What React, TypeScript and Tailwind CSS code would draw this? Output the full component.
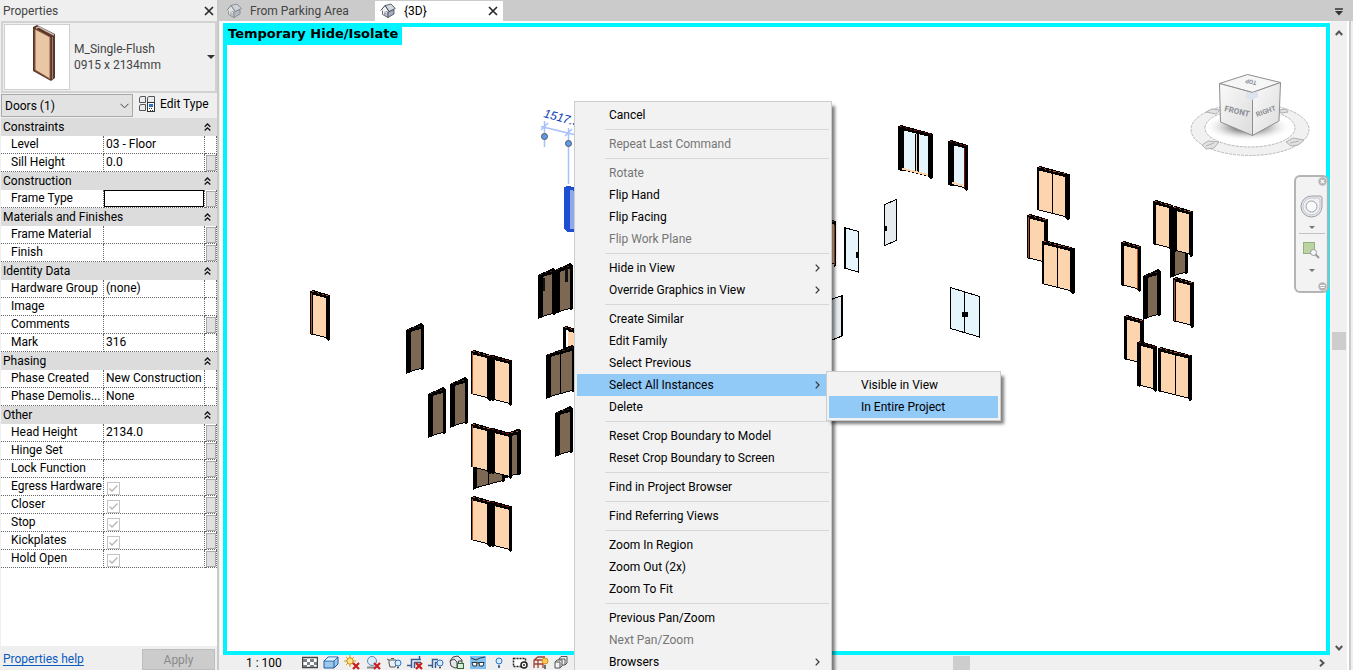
import React from "react";

type Kind = "value" | "check";
type Row = { label: string; value?: string; kind?: Kind; button?: boolean; focus?: boolean };
type Group = { title: string; rows: Row[] };

const groups: Group[] = [
  { title: "Constraints", rows: [{ label: "Level", value: "03 - Floor" }, { label: "Sill Height", value: "0.0", button: true }] },
  { title: "Construction", rows: [{ label: "Frame Type", button: true, focus: true }] },
  { title: "Materials and Finishes", rows: [{ label: "Frame Material", button: true }, { label: "Finish", button: true }] },
  {
    title: "Identity Data",
    rows: [
      { label: "Hardware Group", value: "(none)" },
      { label: "Image" },
      { label: "Comments", button: true },
      { label: "Mark", value: "316" },
    ],
  },
  { title: "Phasing", rows: [{ label: "Phase Created", value: "New Construction" }, { label: "Phase Demolis...", value: "None" }] },
  {
    title: "Other",
    rows: [
      { label: "Head Height", value: "2134.0", button: true },
      { label: "Hinge Set", button: true },
      { label: "Lock Function", button: true },
      { label: "Egress Hardware", kind: "check", button: true },
      { label: "Closer", kind: "check", button: true },
      { label: "Stop", kind: "check", button: true },
      { label: "Kickplates", kind: "check", button: true },
      { label: "Hold Open", kind: "check", button: true },
    ],
  },
];

type Item = { label: string; disabled?: boolean; sub?: boolean; active?: boolean };

const menu: Item[][] = [
  [{ label: "Cancel" }],
  [{ label: "Repeat Last Command", disabled: true }],
  [{ label: "Rotate", disabled: true }, { label: "Flip Hand" }, { label: "Flip Facing" }, { label: "Flip Work Plane", disabled: true }],
  [{ label: "Hide in View", sub: true }, { label: "Override Graphics in View", sub: true }],
  [
    { label: "Create Similar" },
    { label: "Edit Family" },
    { label: "Select Previous" },
    { label: "Select All Instances", sub: true, active: true },
    { label: "Delete" },
  ],
  [{ label: "Reset Crop Boundary to Model" }, { label: "Reset Crop Boundary to Screen" }],
  [{ label: "Find in Project Browser" }],
  [{ label: "Find Referring Views" }],
  [{ label: "Zoom In Region" }, { label: "Zoom Out (2x)" }, { label: "Zoom To Fit" }],
  [{ label: "Previous Pan/Zoom" }, { label: "Next Pan/Zoom", disabled: true }, { label: "Browsers", sub: true }],
];

const submenu: Item[] = [{ label: "Visible in View" }, { label: "In Entire Project", active: true }];

const CREAM = "#fcd4ae";
const BROWN = "#7d6854";
const GLASS = "#e6f4fc";

function CloseX() {
  return (
    <svg width="10" height="10" viewBox="0 0 10 10" aria-hidden="true">
      <path d="M1 1 L9 9 M9 1 L1 9" stroke="#2a2a2a" strokeWidth="1.7" />
    </svg>
  );
}

function HomeIcon({ faded = false }: { faded?: boolean }) {
  return (
    <svg width="16" height="16" viewBox="0 0 16 16" aria-hidden="true" opacity={faded ? 0.55 : 1}>
      <path d="M2.500 6.500 V11.500 L8 14.500 V9 Z" fill="#f4f5f7" stroke="#3f4650" strokeWidth=".8" />
      <path d="M8 9 L14 6.500 V11 L8 14.500 Z" fill="#a3adbd" stroke="#3f4650" strokeWidth=".8" />
      <path d="M5 2.500 L11 1 L15.300 5.500 L9 8.500 Z" fill="#d3d8e0" stroke="#3f4650" strokeWidth=".8" />
      <path d="M.8 7.500 L5 2.500 L9 8.500" fill="#f4f5f7" stroke="#3f4650" />
      <path d="M4.500 9.500 V12.500 L6.200 13.400 V10.300 Z" fill="#c3c9d3" stroke="#5b6270" strokeWidth=".5" />
    </svg>
  );
}

function PropertiesPanel() {
  return (
    <aside className="flex w-[217px] shrink-0 flex-col bg-[#efefef] pl-px">
      <header className="flex h-[21px] items-center justify-between pl-[2px] pr-[3px] text-[#444]">
        <h2>Properties</h2>
        <button aria-label="Close properties" className="flex size-[10px] items-center justify-center">
          <CloseX />
        </button>
      </header>
      <button className="flex h-[72px] items-center border-2 border-[#d2d2d2] pl-px text-left text-[#444]">
        <span className="flex h-[66px] w-[66px] shrink-0 items-start justify-center border border-[#cfcfcf] bg-white">
          <svg width="64" height="60" viewBox="5 24 64 60" aria-hidden="true">
            <path d="M33 26 L37 24 L55 33 V77 L51 80 L33 70 Z" fill="#5a3628" />
            <path d="M35 28 L50 36 V78 L35 69 Z" fill="#e9c6a4" stroke="#8b5a44" />
            <path d="M36 27 L39 26 L54 34" fill="none" stroke="#c9bdb8" strokeWidth="1.5" />
            <path d="M52.500 36 V78" stroke="#9a8078" />
          </svg>
        </span>
        <span className="flex-1 pl-1 leading-4">
          M_Single-Flush
          <br />
          0915 x 2134mm
        </span>
        <svg width="8" height="4" viewBox="0 0 8 4" aria-hidden="true">
          <path d="M0 0 H8 L4 4 Z" fill="#333" />
        </svg>
      </button>
      <div className="flex h-[25px] shrink-0 items-center">
        <label className="relative flex w-[132px] items-center">
          <select aria-label="Category filter" className="h-[23px] w-full appearance-none border border-[#a9a9a9] bg-[#e2e2e2] pl-[3px] text-black">
            <option>Doors (1)</option>
          </select>
          <svg width="9" height="6" viewBox="0 0 9 6" className="absolute right-1" aria-hidden="true">
            <path d="M.5 .8 L4.500 4.800 L8.500 .8" fill="none" stroke="#444" />
          </svg>
        </label>
        <button className="ml-[6px] flex items-center gap-[5px] pb-[3px]">
          <svg width="16" height="16" viewBox="0 0 16 16" aria-hidden="true">
            <g fill="#e9edf2" stroke="#555">
              <path d="M1.500 .5 H6.500 V6.500 H.5 V2 Z" />
              <path d="M9.500 .5 H15.500 V6.500 H8.500 V2 Z" />
              <path d="M1.500 8.500 H6.500 V14.500 H.5 V10 Z" />
              <rect x="8.500" y="6.500" width="7" height="9" fill="#fff" stroke="#333" />
            </g>
            <rect x="10" y="8" width="4" height="3" fill="#2f6fc4" />
            <path d="M10 12.500 h1 M12 12.500 h1 M11 14.500 h1 M13 14.500 h1" stroke="#333" />
          </svg>
          Edit Type
        </button>
      </div>
      <div className="min-h-0 flex-1 bg-white">
        <table className="w-full table-fixed border-separate border-spacing-0 leading-[16px]">
          <colgroup>
            <col className="w-[103px]" />
            <col />
            <col className="w-[12px]" />
          </colgroup>
          {groups.map((g) => (
            <tbody key={g.title}>
              <tr>
                <th colSpan={3} className="h-[18px] bg-[#dcdcdc] p-0 text-left font-normal">
                  <div className="flex h-[18px] items-center justify-between pl-[2px] pr-[6px]">
                    {g.title}
                    <button aria-label={"Collapse " + g.title} className="flex">
                      <svg width="7" height="8" viewBox="0 0 7 8" aria-hidden="true">
                        <path d="M.7 3.700 L3.500 1 L6.300 3.700 M.7 7.500 L3.500 4.800 L6.300 7.500" fill="none" stroke="#111" strokeWidth="1.3" />
                      </svg>
                    </button>
                  </div>
                </th>
              </tr>
              {g.rows.map((r) => (
                <tr key={r.label}>
                  <td className="h-[18px] border-r border-b border-dotted border-[#666] p-0">
                    <label htmlFor={r.label} className="block h-[17px] whitespace-nowrap pl-[10px]">
                      {r.label}
                    </label>
                  </td>
                  <td className="h-[18px] border-r border-b border-dotted border-[#666] p-0">
                    {r.kind === "check" ? (
                      <span className="relative flex h-[17px] items-end pl-[3px]">
                        <input
                          id={r.label}
                          type="checkbox"
                          defaultChecked
                          disabled
                          className="size-[13px] appearance-none border border-[#c4c4c4] bg-white"
                        />
                        <svg width="13" height="13" viewBox="0 0 13 13" className="absolute" aria-hidden="true">
                          <path d="M2.500 6.500 L5 9 L10.500 3.500" fill="none" stroke="#b4b4b4" strokeWidth="1.3" />
                        </svg>
                      </span>
                    ) : (
                      <input
                        id={r.label}
                        defaultValue={r.value ?? ""}
                        className={
                          r.focus
                            ? "block h-[17px] w-full border border-black bg-white px-[2px] outline-none"
                            : "block h-[17px] w-full bg-white pb-px pl-[2px] outline-none"
                        }
                      />
                    )}
                  </td>
                  <td className="h-[18px] border-r border-b border-dotted border-[#666] p-0">
                    {r.button && (
                      <button aria-label={"Associate " + r.label} className="ml-px block h-4 w-[10px] border border-[#aaa] bg-[#e0e0e0]" />
                    )}
                  </td>
                </tr>
              ))}
            </tbody>
          ))}
        </table>
      </div>
      <footer className="flex h-6 shrink-0 items-end justify-between pl-[2px] pr-[2px]">
        <a href="#help" className="mb-[3px] leading-4 text-[#0a5cbf] underline underline-offset-2">
          Properties help
        </a>
        <button disabled className="h-[21px] w-[73px] border border-[#bdbdbd] bg-[#cccccc] text-[#8a8a8a]">
          Apply
        </button>
      </footer>
    </aside>
  );
}

type DoorProps = {
  x: number;
  r: number;
  y: number;
  h?: number;
  up?: boolean;
  fill?: string;
  lw?: number;
  rw?: number;
  mid?: number;
  edge?: "left" | "right";
  edgeColor?: string;
  dots?: string;
};

function Door({ x, r, y, h = 43, up, fill = CREAM, lw = 3, rw = 4, mid, edge, edgeColor = "#a9542f", dots = "#b05030" }: DoorProps) {
  const k = up ? -0.27 : 0.25;
  const at = (px: number) => y + (px - x) * k;
  const a = x + lw;
  const b = r - rw;
  const top = up ? `${x},${y} ${r - 3},${at(r) - 2} ${r},${at(r)}` : `${x},${y} ${x + 3},${y - 1} ${r},${at(r) - 1}`;
  const foot = Math.min(2, lw - 2);
  return (
    <g>
      <polygon points={`${top} ${r},${at(r) + h} ${x},${y + h}`} fill="#000" />
      {foot > 0 && <polygon points={`${x},${y + h - 1} ${a},${at(a) + h - 1} ${a - 1},${at(a) + h + 1} ${x},${y + h + foot - 1}`} fill="#000" />}
      <polygon points={`${b},${at(b) + h - 1} ${r},${at(r) + h - 1} ${r},${at(r) + h} ${r - 2},${at(r) + h + 2} ${b},${at(b) + h}`} fill="#000" />
      <polygon points={`${a},${at(a) + 3} ${b},${at(b) + 3} ${b},${at(b) + h - 1} ${a},${at(a) + h - 1}`} fill={fill} />
      <line x1={x + 2} y1={at(x + 2)} x2={r - 2} y2={at(r - 2)} stroke={dots} strokeDasharray="2 3" />
      {mid && <line x1={mid} x2={mid} y1={at(mid) + 2} y2={at(mid) + h} stroke="#000" />}
      {edge === "left" && <line x1={x + 1} x2={x + 1} y1={y + 2} y2={y + h} stroke={edgeColor} />}
      {edge === "right" && <line x1={b} x2={b} y1={at(b) + 3} y2={at(b) + h} stroke={edgeColor} />}
    </g>
  );
}

function Scene() {
  return (
    <svg viewBox="227 27 1099 624" preserveAspectRatio="xMinYMin meet" className="block h-full w-full" role="img" aria-label="3D view of doors">
      <g shapeRendering="crispEdges">
        <Door x={310} r={330} y={291} edge="left" />
        <Door x={406} r={424} y={330} up fill={BROWN} lw={5} rw={3} dots="#4a2a20" />
        <Door x={428} r={446} y={394} up fill={BROWN} lw={5} rw={3} dots="#4a2a20" />
        <Door x={450} r={468} y={384} up fill={BROWN} lw={5} rw={3} dots="#4a2a20" />

        <Door x={473} r={505} y={449} h={40} up fill={BROWN} lw={4} rw={3} mid={488} />
        <Door x={504} r={521} y={435} up fill={BROWN} lw={5} rw={4} />
        {[351, 424, 497].map((y) => (
          <g key={y}>
            <Door x={471} r={492} y={y} lw={2} rw={5} edge="left" />
            <Door x={490} r={512} y={y + 5} lw={5} rw={3} dots="#8a1010" />
          </g>
        ))}

        <Door x={538} r={556} y={275} up fill={BROWN} lw={5} rw={4} dots="#4a2a20" />
        <Door x={555} r={573} y={270} up fill={BROWN} lw={5} rw={3} dots="#4a2a20" />
        <path d="M543 278 h2 v13 h-2 z M566 268 h2 v14 h-3 v-13 z" fill="#111" />
        <Door x={563} r={580} y={327} fill={CREAM} lw={5} rw={3} />
        <rect x="566" y="330" width="2" height="25" fill="#fff" />
        <Door x={546} r={575} y={355} up fill={BROWN} lw={5} rw={3} mid={560} dots="#4a2a20" />
        <Door x={555} r={573} y={413} up fill={BROWN} lw={5} rw={3} dots="#4a2a20" />

        <polygon points="564,187 568,186 580,188 580,232 567,232 564,229" fill="#1f4fd0" />
        <polygon points="570,190 580,192 580,230 570,229" fill="#8ea8ec" />

        <Door x={820} r={836} y={218} lw={12} rw={2} edge="right" />
        <path d="M844 227.500 L858.500 231.500 V272 L844 268 Z" fill={GLASS} stroke="#000" />
        <path d="M844.500 227 V268" stroke="#000" strokeWidth="2" />
        <rect x="856" y="252" width="2" height="6" fill="#000" />
        <path d="M884.500 204.500 L896.500 199.500 V240.500 L884.500 245.500 Z" fill="#e6ebf0" stroke="#000" />
        <rect x="884" y="226" width="3" height="5" fill="#000" />
        <path d="M828.500 300.500 L842 295.500 V336 L828.500 341.500 Z" fill="#e6ebf0" stroke="#000" />
        <path d="M842 295 V336" stroke="#000" strokeWidth="2" />
        <path d="M950.500 287.500 L979.500 296.500 V337 L950.500 328.500 Z M964.500 292 V332" fill={GLASS} stroke="#000" />
        <rect x="962" y="312" width="6" height="5" fill="#000" />

        <Door x={898} r={933} y={126} fill={GLASS} lw={6} rw={5} dots="#8a1010" />
        <path d="M916.500 134 V173" stroke="#000" strokeWidth="4" />
        <path d="M916.500 134 V172" stroke={CREAM} />
        <path d="M902 168.500 L928 175" stroke={CREAM} strokeWidth="2" />
        <Door x={948} r={968} y={141} fill={GLASS} lw={6} rw={4} edge="right" edgeColor="#7a0d10" dots="#8a1010" />
        <path d="M952 182.500 L963 185.500" stroke={CREAM} strokeWidth="2" />

        <Door x={1037} r={1070} y={167} lw={2} rw={5} mid={1052} />
        <Door x={1027} r={1048} y={215} edge="left" />
        <Door x={1042} r={1075} y={241} lw={2} rw={5} mid={1057} />

        <Door x={1170} r={1188} y={234} up fill={BROWN} lw={5} rw={3} />
        <Door x={1153} r={1173} y={201} lw={3} rw={4} />
        <Door x={1172} r={1193} y={207} lw={5} rw={4} />
        <Door x={1121} r={1141} y={242} edge="right" />
        <Door x={1143} r={1161} y={276} up fill={BROWN} lw={5} rw={4} dots="#4a2a20" />
        <Door x={1173} r={1194} y={278} edge="left" />
        <Door x={1124} r={1144} y={316} />
        <Door x={1137} r={1157} y={342} lw={4} dots="#8a1010" />
        <Door x={1158} r={1192} y={348} lw={3} rw={4} mid={1175} />
      </g>

      <g stroke="#a8c0fa" strokeWidth="1.500" fill="none">
        <path d="M544.500 121 V147 M568.500 128 V184 M541 126.500 L576 135 M541 130 L548 123 M565 136 L572 129" />
      </g>
      <g fill="#5a9cf0" stroke="#555">
        <circle cx="544.500" cy="136.500" r="3" />
        <circle cx="568.500" cy="143.500" r="3" />
      </g>
      <text x="543" y="117" transform="rotate(15 543 117)" fill="#0b3fb5" fontSize="12" fontStyle="italic" fontFamily="Liberation Sans, sans-serif">
        1517.5
      </text>

      <defs>
        <radialGradient id="cubeShadow">
          <stop offset="0.300" stopColor="#888" />
          <stop offset="1" stopColor="#fff" stopOpacity="0" />
        </radialGradient>
        <linearGradient id="cubeFront" x1="0" y1="0" x2="1" y2="1">
          <stop offset="0" stopColor="#fafafa" />
          <stop offset="1" stopColor="#dcdcdc" />
        </linearGradient>
      </defs>
      <path
        fillRule="evenodd"
        d="M1191 129.500 a59 26 0 1 0 118 0 a59 26 0 1 0 -118 0 Z M1205 128 a45 19 0 1 1 90 0 a45 19 0 1 1 -90 0 Z"
        fill="#f1f1f1"
        stroke="#b9b9b9"
        strokeDasharray="3 1"
      />
      <ellipse cx="1248" cy="127" rx="44" ry="14" fill="url(#cubeShadow)" />
      <g fill="#e2e2e2" stroke="#b0b0b0">
        <path d="M1202 145 L1208 141 L1219 142 L1214 148 L1206 149 Z M1286 142 L1293 138 L1304 140 L1298 145 L1291 146 Z M1206 112 L1212 109 L1220 110 L1216 114 Z M1279 110 L1286 109 L1288 112 L1281 113 Z" />
        <path d="M1206 146 L1214 143 M1290 143 L1299 141" />
      </g>
      <g stroke="#8e8e8e" strokeLinejoin="round">
        <path d="M1219.500 83.500 L1247.500 74.500 L1280.500 82.500 L1252.500 92.500 Z" fill="#f6f6f6" />
        <path d="M1219.500 83.500 L1252.500 92.500 V135.500 L1220.500 122 Z" fill="url(#cubeFront)" />
        <path d="M1252.500 92.500 L1280.500 82.500 L1279 121 L1252.500 135.500 Z" fill="url(#cubeFront)" />
      </g>
      <path d="M1246 92 L1252 93 L1258 91 V97 L1252 100 L1246 98 Z" fill="#dde3ee" />
      <g fill="#8b8f96" fontWeight="700" fontFamily="Roboto, sans-serif">
        <text x="1224" y="111" transform="rotate(13 1224 111)" fontSize="8">
          FRONT
        </text>
        <text x="1257" y="117" transform="rotate(-20 1257 117)" fontSize="7">
          RIGHT
        </text>
        <text x="1257" y="81" transform="rotate(192 1257 81)" fontSize="6">
          TOP
        </text>
      </g>
    </svg>
  );
}

function NavigationBar() {
  return (
    <div
      role="toolbar"
      aria-label="Navigation"
      className="absolute -right-[3px] top-[148px] flex h-[118px] w-[35px] flex-col items-center rounded-md border-2 border-[#8a8a8a]/60 bg-[#f2f2f2]/90"
    >
      <button aria-label="Close navigation bar" className="self-end">
        <svg width="9" height="9" viewBox="0 0 9 9" aria-hidden="true">
          <circle cx="4.500" cy="4.500" r="4.200" fill="#b5b5b5" />
          <path d="M2.800 2.800 L6.200 6.200 M6.200 2.800 L2.800 6.200" stroke="#fff" strokeWidth="1.200" />
        </svg>
      </button>
      <button aria-label="Steering wheel" className="mt-[9px] flex flex-col items-center gap-2">
        <svg width="23" height="23" viewBox="0 0 23 23" aria-hidden="true">
          <path d="M11.500 1 H20 Q22 1 22 3 V11.500 A10.500 10.500 0 1 1 11.500 1 Z" fill="#e9eaee" stroke="#9a9da3" />
          <path d="M11.500 3 H18 Q20 3 20 5 V11.500 A8.500 8.500 0 1 1 11.500 3 Z" fill="#f1f2f5" stroke="#c3c5ca" />
          <circle cx="11.500" cy="11.500" r="5.500" fill="#fafafa" stroke="#9a9da3" />
        </svg>
        <svg width="6" height="3" viewBox="0 0 6 3" aria-hidden="true">
          <path d="M0 0 H6 L3 3 Z" fill="#777" />
        </svg>
      </button>
      <hr className="mt-1 w-[26px] border-[#c2c2c2]" />
      <button aria-label="Zoom" className="mt-2 flex flex-col items-center gap-[10px]">
        <svg width="17" height="17" viewBox="0 0 17 17" aria-hidden="true">
          <rect x=".5" y=".5" width="11" height="11" fill="#bcd3a4" stroke="#94b07c" />
          <path d="M12 12 L16 16" stroke="#9a9a9a" strokeWidth="2" />
          <circle cx="10.500" cy="10.500" r="3" fill="#f4f8fa" stroke="#9a9a9a" />
        </svg>
        <svg width="6" height="3" viewBox="0 0 6 3" aria-hidden="true">
          <path d="M0 0 H6 L3 3 Z" fill="#777" />
        </svg>
      </button>
      <button aria-label="Customize" className="mt-auto self-end">
        <svg width="9" height="9" viewBox="0 0 9 9" aria-hidden="true">
          <circle cx="4.500" cy="4.500" r="4.200" fill="#b5b5b5" />
          <path d="M2 3.500 H7 M2.500 5.500 H6.500" stroke="#fff" />
        </svg>
      </button>
    </div>
  );
}

function Chevron() {
  return (
    <svg width="5" height="8" viewBox="0 0 5 8" aria-hidden="true">
      <path d="M.7 .7 L4 4 L.7 7.300" fill="none" stroke="#333" strokeWidth="1.200" />
    </svg>
  );
}

function MenuButton({ item }: { item: Item }) {
  return (
    <button
      role="menuitem"
      disabled={item.disabled}
      className={
        item.active
          ? "flex h-[22px] w-full items-center justify-between bg-[#91c9f7] pl-8 pr-[9px] text-black"
          : "flex h-[22px] w-full items-center justify-between pl-8 pr-[9px] text-black disabled:text-[#767676]"
      }
    >
      {item.label}
      {item.sub && <Chevron />}
    </button>
  );
}

function ContextMenu() {
  return (
    <div role="menu" className="absolute left-[574px] top-[101px] w-[258px] border border-[#ccc] bg-[#f2f2f2] p-[2px] shadow-[4px_4px_3px_-1px_rgba(0,0,0,0.5)]">
      {menu.map((section, i) => (
        <div key={section[0].label}>
          {i > 0 && <hr className="my-[3px] ml-7 border-[#d7d7d7]" />}
          {section.map((item) =>
            item.active ? (
              <div key={item.label} className="relative">
                <MenuButton item={item} />
                <div
                  role="menu"
                  className="absolute -top-[3px] left-[249px] z-10 w-[175px] border border-[#ccc] bg-[#f2f2f2] p-[2px] shadow-[4px_4px_3px_-1px_rgba(0,0,0,0.5)]"
                >
                  {submenu.map((s) => (
                    <MenuButton key={s.label} item={s} />
                  ))}
                </div>
              </div>
            ) : (
              <MenuButton key={item.label} item={item} />
            ),
          )}
        </div>
      ))}
    </div>
  );
}

const redX = <path d="M9 8 L15 14 M15 8 L9 14" stroke="#c81e1e" strokeWidth="2.200" />;
const bulb = (
  <g>
    <circle cx="12" cy="8" r="3" fill="#d9ecff" stroke="#2a72c8" />
    <path d="M11 12.500 h2" stroke="#444" strokeWidth="1.500" />
  </g>
);

const viewIcons: { label: string; art: React.ReactNode }[] = [
  {
    label: "Detail level",
    art: (
      <g>
        <rect x=".5" y="2.500" width="15" height="10" fill="#fff" stroke="#444" strokeWidth="1.500" />
        <path d="M1 4 h4 v3 h-4 z M8 4 h4 v3 h-4 z M5 7 h3 v3 h-3 z M12 7 h3 v3 h-3 z M1 10 h4 v2 h-4 z M8 10 h4 v2 h-4 z" fill="#7a8088" />
      </g>
    ),
  },
  {
    label: "Visual style",
    art: (
      <g fill="#9cc8ee" stroke="#235c9c">
        <path d="M1 6 L5 2 H15 V9 L11 13 H1 Z" />
        <path d="M1 6 H11 V13 M11 6 L15 2" fill="none" />
        <path d="M2 5.500 L5.300 2.500 H14 L11 5.500 Z" fill="#dff0ff" stroke="none" />
      </g>
    ),
  },
  {
    label: "Sun path",
    art: (
      <g>
        <path d="M6 0 V12 M0 6 H12 M2 2 L10 10 M10 2 L2 10" stroke="#d89a1c" />
        <circle cx="6" cy="6" r="3.200" fill="#ffe48a" stroke="#c98a10" />
        {redX}
      </g>
    ),
  },
  {
    label: "Shadows",
    art: (
      <g>
        <circle cx="7" cy="6" r="4.500" fill="#dcecfa" stroke="#5a86b4" />
        <path d="M2 12.500 H10" stroke="#888" strokeWidth="2" />
        {redX}
      </g>
    ),
  },
  {
    label: "Rendering dialog",
    art: (
      <g>
        <path d="M3 5 L1 4 M3 5 H10 L11 8 L9 12 H4 L3 8 Z M5 3.500 H8" fill="#eee" stroke="#555" />
        {bulb}
      </g>
    ),
  },
  {
    label: "Crop view",
    art: (
      <g>
        <path d="M0 10.500 H4 M4.500 13 V4.500 H14 M7 7.500 H14 M7.500 7 V13 M12.500 1 V5" stroke="#3a5c90" strokeWidth="1.500" fill="none" />
        {redX}
      </g>
    ),
  },
  {
    label: "Crop region",
    art: (
      <g>
        <path d="M0 10.500 H4 M4.500 13 V4.500 H10 M7.500 7 V13 M7 7.500 H9" stroke="#3a5c90" strokeWidth="1.500" fill="none" />
        {bulb}
      </g>
    ),
  },
  {
    label: "Lock 3D view",
    art: (
      <g>
        <path d="M1 6 L4 2 L9 1 L13 5 V12 L6 13 L2 11 Z" fill="#e3e5e8" stroke="#444" />
        <path d="M1 6 L5 4 L8 7 V13" fill="none" stroke="#444" />
        <rect x="8.500" y="8.500" width="6" height="5" fill="#d9edd6" stroke="#2f6a3a" />
        <path d="M9.500 8 V6 H13" stroke="#444" fill="none" />
      </g>
    ),
  },
  {
    label: "Temporary hide or isolate",
    art: (
      <g>
        <rect x="0" y="1" width="16" height="13" fill="#7ec0f0" />
        <path d="M1 3 L6 5 L10 3 L15 2" stroke="#333" fill="none" />
        <path d="M2 7.500 H7 L6.500 11 H3 Z M9 7.500 H14 L13 11 H9.500 Z M7 8 H9" fill="#fff" stroke="#333" />
      </g>
    ),
  },
  {
    label: "Reveal hidden elements",
    art: (
      <g>
        <circle cx="8" cy="6" r="3" fill="#d9ecff" stroke="#2a72c8" />
        <path d="M7 11.500 h2" stroke="#2a5a9a" strokeWidth="2.500" />
      </g>
    ),
  },
  {
    label: "Temporary view properties",
    art: (
      <g>
        <rect x="1.500" y="3.500" width="12" height="8" fill="#fff" stroke="#222" strokeDasharray="2 1" strokeWidth="1.500" />
        <circle cx="12" cy="10" r="3" fill="#fff" stroke="#222" strokeWidth="1.500" />
        <circle cx="12" cy="10" r="1" fill="#222" />
      </g>
    ),
  },
  {
    label: "Analytical model",
    art: (
      <g>
        <path d="M1 5 L5 2 H12 M1 5 H10 V13 M1 5 V13 M5 5 V13 M1 9 H10" stroke="#a04030" fill="none" strokeWidth="1.300" />
        <circle cx="12" cy="6" r="3" fill="#ffc65a" stroke="#d98a1a" />
        <path d="M12 10 v4" stroke="#444" strokeWidth="1.500" />
      </g>
    ),
  },
  {
    label: "Displacement sets",
    art: (
      <g fill="#f2f2f2" stroke="#555">
        <path d="M5 4 L7 1.500 H13 V8 L11 10 H5 Z M5 4 H11 V10" />
        <path d="M1 7 L3 5 H8 V11 L6 13 H1 Z M1 7 H6 V13" />
      </g>
    ),
  },
];

function StatusBar() {
  return (
    <footer className="flex h-[15px] shrink-0 items-center bg-[#efefef]">
      <button className="w-[82px] pl-[26px] text-left leading-none">1 : 100</button>
      <div className="flex gap-[5px]">
        {viewIcons.map((i) => (
          <button key={i.label} aria-label={i.label} className="h-[15px] w-4">
            <svg width="16" height="15" viewBox="0 0 16 15" aria-hidden="true">
              {i.art}
            </svg>
          </button>
        ))}
      </div>
      <div className="ml-[5px] flex h-full flex-1 items-center border-l border-[#d0d0d0] bg-[#f0f0f0]">
        <span className="flex-[378]" />
        <span className="mt-px h-[14px] w-[17px] bg-[#cdcdcd]" />
        <span className="flex-[349]" />
        <button aria-label="Scroll right" className="mr-[22px]">
          <svg width="6" height="8" viewBox="0 0 6 8" aria-hidden="true">
            <path d="M1 .8 L4.500 4 L1 7.200" fill="none" stroke="#555" strokeWidth="2" />
          </svg>
        </button>
      </div>
    </footer>
  );
}

export default function App() {
  return (
    <div className="relative flex h-screen w-full overflow-hidden bg-[#c9c9c9] font-['Roboto','Noto_Sans_CJK_KR',sans-serif] text-[12px] text-black">
      <PropertiesPanel />
      <main className="ml-[2px] flex min-w-0 flex-1 flex-col">
        <nav className="flex h-[21px] shrink-0 items-end bg-[#cbcbcb]">
          <button className="flex h-5 w-[156px] items-center gap-2 pl-[7px] text-[#444]">
            <HomeIcon faded />
            From Parking Area
          </button>
          <div className="flex h-5 w-[128px] items-center justify-between bg-white pl-[5px] pr-[5px]">
            <button className="flex items-center gap-2">
              <HomeIcon />
              {"{3D}"}
            </button>
            <button aria-label="Close 3D view">
              <CloseX />
            </button>
          </div>
          <button aria-label="List views" className="mb-[5px] ml-auto mr-[10px]">
            <svg width="8" height="8" viewBox="0 0 8 8" aria-hidden="true">
              <path d="M0 1 H8" stroke="#333" strokeWidth="1.500" />
              <path d="M0 3 H8 L4 7.500 Z" fill="#333" />
            </svg>
          </button>
        </nav>
        <div className="flex min-h-0 flex-1 bg-white">
          <div className="w-px bg-[#efefef]" />
          <div className="flex min-w-0 flex-1 flex-col">
            <div className="flex min-h-0 flex-1">
              <section className="relative ml-[3px] mt-[2px] min-w-0 flex-1 border-4 border-[#00f4ff] bg-white">
                <Scene />
                <h1 className="absolute -left-1 -top-1 flex h-[22px] items-center bg-[#00f4ff] pl-[5px] pr-1 font-['DejaVu_Sans',sans-serif] text-[13px] font-bold">
                  Temporary Hide/Isolate
                </h1>
                <NavigationBar />
              </section>
              <div className="ml-px flex w-4 shrink-0 flex-col items-center bg-[#f0f0f0] pb-1 pt-[9px]">
                <button aria-label="Scroll up">
                  <svg width="8" height="6" viewBox="0 0 8 6" aria-hidden="true">
                    <path d="M.8 5 L4 1.500 L7.200 5" fill="none" stroke="#555" strokeWidth="2" />
                  </svg>
                </button>
                <span className="flex-[294]" />
                <span className="h-[18px] w-[14px] bg-[#cdcdcd]" />
                <span className="flex-[294]" />
                <button aria-label="Scroll down">
                  <svg width="8" height="6" viewBox="0 0 8 6" aria-hidden="true">
                    <path d="M.8 1 L4 4.500 L7.200 1" fill="none" stroke="#555" strokeWidth="2" />
                  </svg>
                </button>
              </div>
            </div>
            <StatusBar />
          </div>
          <div className="ml-[2px] w-[2px] bg-[#cbcbcb]" />
          <div className="w-[2px] bg-[#efefef]" />
        </div>
      </main>
      <ContextMenu />
    </div>
  );
}
